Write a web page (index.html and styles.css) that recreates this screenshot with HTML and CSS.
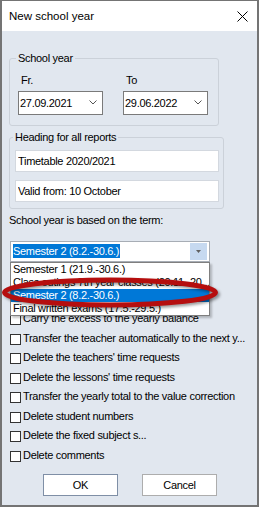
FILE: index.html
```html
<!DOCTYPE html>
<html lang="en">
<head>
    <meta charset="UTF-8">
    <meta name="viewport" content="width=device-width, initial-scale=1.0">
    <title>New school year</title>
    <link rel="stylesheet" href="styles.css">
</head>
<body>
    <div class="window">
        <div class="titlebar">
            <span class="title">New school year</span>
            <svg class="close" width="11" height="11" viewBox="0 0 11 11">
                <path d="M0.5 0.5 L10.5 10.5 M10.5 0.5 L0.5 10.5" stroke="#000" stroke-width="1" fill="none"/>
            </svg>
        </div>
        <div class="content">
            <fieldset class="group group-year">
                <legend>School year</legend>
                <div class="dates">
                    <div class="date-col">
                        <div class="lbl">Fr.</div>
                        <div class="datebox">
                            <span>27.09.2021</span>
                            <svg width="8" height="5" viewBox="0 0 8 5"><path d="M0.5 0.5 L4 4 L7.5 0.5" stroke="#555" fill="none"/></svg>
                        </div>
                    </div>
                    <div class="date-col">
                        <div class="lbl">To</div>
                        <div class="datebox">
                            <span>29.06.2022</span>
                            <svg width="8" height="5" viewBox="0 0 8 5"><path d="M0.5 0.5 L4 4 L7.5 0.5" stroke="#555" fill="none"/></svg>
                        </div>
                    </div>
                </div>
            </fieldset>

            <fieldset class="group group-heading">
                <legend>Heading for all reports</legend>
                <input type="text" class="txt" value="Timetable 2020/2021">
                <input type="text" class="txt" value="Valid from: 10 October">
            </fieldset>

            <div class="term-lbl">School year is based on the term:</div>

            <div class="combo-wrap">
                <div class="combo">
                    <span class="combo-sel">Semester 2 (8.2.-30.6.)</span>
                    <span class="combo-btn">
                        <svg width="5" height="3" viewBox="0 0 5 3"><path d="M0 0 H5 L2.5 3 Z" fill="#606060"/></svg>
                    </span>
                </div>
                <div class="droplist">
                    <div class="item">Semester 1 (21.9.-30.6.)</div>
                    <div class="item">Class outings 7th year classes (20.11.-20...</div>
                    <div class="item active">Semester 2 (8.2.-30.6.)</div>
                    <div class="item">Final written exams (17.5.-29.5.)</div>
                </div>
                <svg class="mark" width="222" height="34" viewBox="0 0 222 34">
                    <ellipse cx="108" cy="14.5" rx="105.5" ry="12.5" fill="none" stroke="#b50e0e" stroke-width="5"/>
                </svg>
            </div>

            <div class="checks">
                <label class="row"><input type="checkbox" class="chk"><span>Carry the excess to the yearly balance</span></label>
                <label class="row"><input type="checkbox" class="chk"><span>Transfer the teacher automatically to the next y...</span></label>
                <label class="row"><input type="checkbox" class="chk"><span>Delete the teachers' time requests</span></label>
                <label class="row"><input type="checkbox" class="chk"><span>Delete the lessons' time requests</span></label>
                <label class="row"><input type="checkbox" class="chk"><span>Transfer the yearly total to the value correction</span></label>
                <label class="row"><input type="checkbox" class="chk"><span>Delete student numbers</span></label>
                <label class="row"><input type="checkbox" class="chk"><span>Delete the fixed subject s...</span></label>
                <label class="row"><input type="checkbox" class="chk"><span>Delete comments</span></label>
            </div>

            <div class="buttons">
                <button class="btn btn-ok">OK</button>
                <button class="btn">Cancel</button>
            </div>
        </div>
    </div>
</body>
</html>
```

FILE: styles.css
```css
html, body {
    margin: 0;
    padding: 0;
    height: 100%;
    overflow: hidden;
}

body {
    font-family: "Liberation Sans", Arial, sans-serif;
    font-size: 11px;
    color: #000;
}

.window {
    width: 259px;
    height: 507px;
    box-sizing: border-box;
    border: 2px solid #747474;
    border-top-width: 1px;
    display: flex;
    flex-direction: column;
}

.titlebar {
    height: 30px;
    flex: none;
    background: #fff;
    display: flex;
    align-items: center;
    justify-content: space-between;
    padding: 0 9px 0 7px;
}
.title { font-size: 11.5px; }
.close { display: block; }

.content {
    flex: 1;
    background: #e1e7ef;
    padding-left: 7px;
    letter-spacing: -0.3px;
}

.group {
    border: 1px solid #cbd1d9;
    border-radius: 3px;
    margin: 0;
    min-width: 0;
}
.group legend {
    padding: 0 2px;
    margin-left: -2px;
    line-height: 13px;
}

.group-year {
    width: 210px;
    box-sizing: border-box;
    margin-top: 20.5px;
    padding: 0 10px 10px 8px;
}
.dates {
    display: grid;
    grid-template-columns: 85px 85px;
    column-gap: 20px;
    padding-top: 9px;
}
.lbl {
    line-height: 13px;
    padding-left: 3px;
    margin-bottom: 4px;
}
.datebox {
    height: 24px;
    box-sizing: border-box;
    background: #fff;
    border: 1px solid #7a7a7a;
    display: flex;
    align-items: center;
    justify-content: space-between;
    padding: 0 5px 0 1px;
}
.datebox svg { display: block; }

.group-heading {
    width: 215px;
    box-sizing: border-box;
    margin-top: 5.5px;
    padding: 5.5px 4px 6px 5px;
    display: flex;
    flex-direction: column;
    gap: 8px;
}
.txt {
    height: 22px;
    box-sizing: border-box;
    margin: 0;
    border: 1px solid #d3d8df;
    background: #fff;
    padding: 0 2px;
    font: inherit;
    letter-spacing: inherit;
    color: #000;
    outline: none;
}

.term-lbl {
    margin-top: 5px;
    line-height: 13px;
}

.combo-wrap {
    position: relative;
    margin: 14px 0 0 1px;
    width: 200px;
}
.combo {
    height: 21px;
    box-sizing: border-box;
    border: 1px solid #a7adb5;
    background: #fff;
    display: flex;
    align-items: center;
    justify-content: space-between;
    padding: 1px 2px 1px 2px;
}
.combo-sel {
    background: #0078d7;
    color: #fff;
    line-height: 14px;
    padding: 0 1px 0 0;
}
.combo-btn {
    width: 17px;
    height: 17px;
    background: #c6d9f0;
    display: flex;
    align-items: center;
    justify-content: center;
}
.combo-btn svg { display: block; }

.droplist {
    position: absolute;
    top: 21px;
    left: 0;
    width: 200px;
    box-sizing: border-box;
    background: #fff;
    border: 1px solid #7f7f7f;
    box-shadow: 2px 2px 2px rgba(0, 0, 0, 0.22);
    overflow: hidden;
    z-index: 2;
}
.item {
    line-height: 13px;
    height: 13px;
    padding-left: 2px;
    white-space: nowrap;
}
.item.active {
    background: #0078d7;
    color: #fff;
}

.mark {
    position: absolute;
    left: -8px;
    top: 37px;
    overflow: visible;
    z-index: 3;
    filter: drop-shadow(2px 2px 1.5px rgba(0, 0, 0, 0.4));
}

.checks {
    margin-top: 48.5px;
}
.row {
    display: flex;
    align-items: flex-start;
    height: 19.5px;
    white-space: nowrap;
}
.row span { line-height: 16px; }
.chk {
    appearance: none;
    -webkit-appearance: none;
    width: 11px;
    height: 11px;
    margin: 4px 2px 0 1px;
    box-sizing: border-box;
    border: 1px solid #333;
    background: #fff;
    flex: none;
}

.buttons {
    display: flex;
    gap: 24px;
    padding-left: 34px;
    margin-top: 7.5px;
}
.btn {
    width: 75px;
    height: 22px;
    box-sizing: border-box;
    background: #fff;
    border: 1px solid #adadad;
    font: inherit;
    letter-spacing: inherit;
    color: #000;
    padding: 0;
}
.btn-ok { border-color: #7f8fa6; }
```
